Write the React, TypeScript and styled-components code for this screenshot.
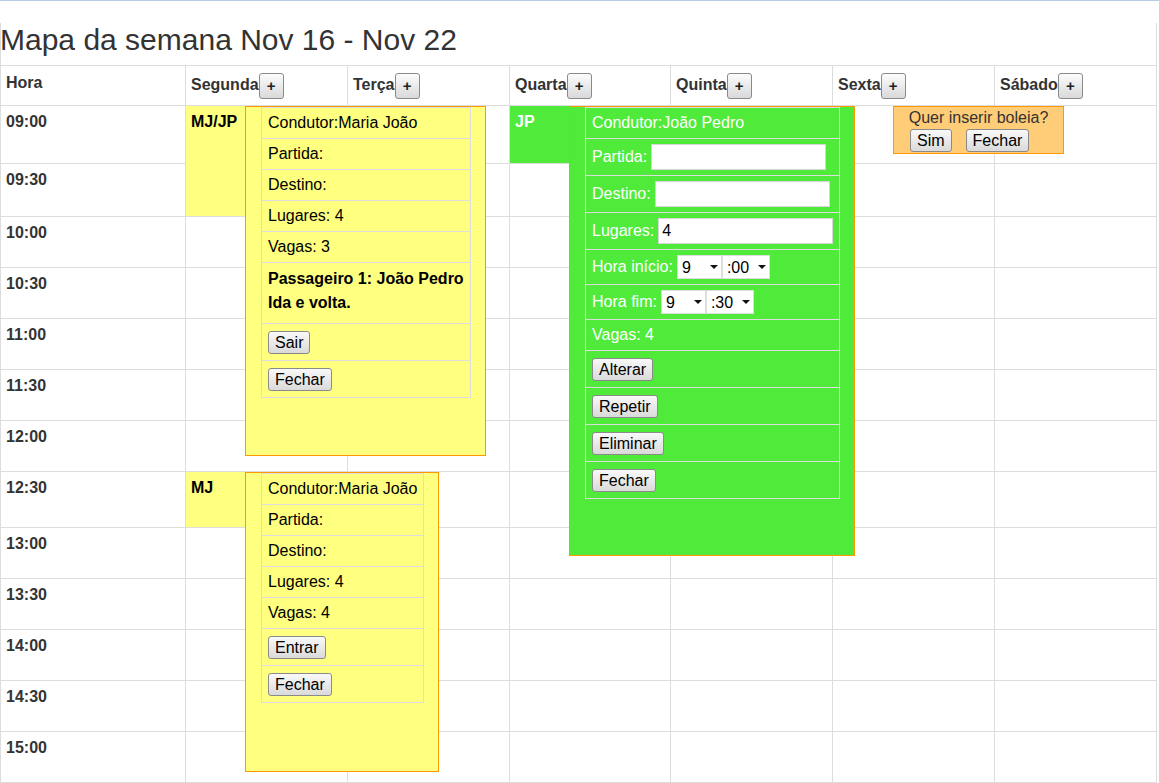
import React from "react";
import styled, { createGlobalStyle } from "styled-components";

const GlobalStyle = createGlobalStyle`
  html, body { margin: 0; padding: 0; background: #fff; overflow: hidden; }
  body {
    font-family: "Liberation Sans", Arial, Helvetica, sans-serif;
    font-size: 14px;
    line-height: 1.42857;
    color: #333;
  }
  * { box-sizing: border-box; }
`;

const Frame = styled.div`
  border-top: 1px solid #b9cbe2;
`;

const Page = styled.div`
  width: 1157px;
  border-left: 1px solid #ddd;
  border-right: 1px solid #ddd;
`;

const Title = styled.h2`
  margin: 22px 0 9px -1px;
  font-size: 30px;
  font-weight: normal;
  line-height: 33px;
  color: #333;
`;

const Schedule = styled.div`
  display: grid;
  grid-template-columns: 184px 161px 161px 160px 161px 161px 161px;
  grid-template-rows: 39px 57px 52px 50px 50px 50px 50px 50px 55px 50px 50px 50px 50px 50px;
  gap: 1px;
  background: #ddd;
  border-top: 1px solid #ddd;
  border-bottom: 1px solid #ddd;
`;

const HeadCell = styled.div<{ $top?: boolean }>`
  background: #fff;
  display: flex;
  align-items: ${(p) => (p.$top ? "flex-start" : "center")};
  padding: ${(p) => (p.$top ? "6px 5px 0" : "0 5px")};
  font-size: 16px;
  font-weight: bold;
  line-height: 22.86px;
  color: #333;
`;

const AddButton = styled.button`
  width: 25px;
  height: 26px;
  margin: 0;
  padding: 0;
  display: flex;
  align-items: center;
  justify-content: center;
  border: 1px solid #8a8a8a;
  border-radius: 3px;
  background: linear-gradient(#fcfcfc, #d9d9d9);
  font: bold 15px "Liberation Sans", Arial, sans-serif;
  color: #222;
`;

const TimeCell = styled.div`
  background: #fff;
  padding: 5px;
  font-size: 16px;
  font-weight: bold;
  line-height: 22.86px;
  color: #333;
`;

const Cell = styled.div<{ $bg?: string; $color?: string; $span?: number }>`
  position: relative;
  background: ${(p) => p.$bg ?? "#fff"};
  color: ${(p) => p.$color ?? "#000"};
  grid-row: ${(p) => (p.$span ? `span ${p.$span}` : "auto")};
  padding: 5px;
  font-size: 16px;
  font-weight: bold;
  line-height: 22.86px;
`;

const Popup = styled.div<{ $bg: string; $color: string; $height: number }>`
  position: absolute;
  top: 0;
  left: 59px;
  z-index: 5;
  width: max-content;
  height: ${(p) => p.$height}px;
  padding: 0 14px 0 15px;
  background: ${(p) => p.$bg};
  color: ${(p) => p.$color};
  border: 1px solid #ff9900;
  font-size: 16px;
  font-weight: normal;
`;

const InfoTable = styled.div`
  display: flex;
  flex-direction: column;
  width: max-content;
  border: 1px solid #ddd;
`;

const InfoRow = styled.div<{ $pad?: string; $lh?: number; $bold?: boolean }>`
  display: flex;
  align-items: center;
  padding: ${(p) => p.$pad ?? "4px 6px"};
  line-height: ${(p) => p.$lh ?? 22}px;
  font-weight: ${(p) => (p.$bold ? "bold" : "normal")};
  white-space: nowrap;
  & + & {
    border-top: 1px solid #ddd;
  }
`;

const PassengerText = styled.div``;

const TextField = styled.input`
  width: 175px;
  height: 26px;
  margin: 0 0 0 4px;
  padding: 1px 3px;
  border: 1px solid #d6d6d6;
  background: #fff;
  font: 16px "Liberation Sans", Arial, sans-serif;
  color: #000;
  outline: none;
`;

const SelectPair = styled.span`
  display: inline-flex;
  margin-left: 4px;
`;

const SelectBox = styled.span`
  position: relative;
  display: inline-flex;
`;

const Select = styled.select<{ $w: number }>`
  appearance: none;
  -webkit-appearance: none;
  width: ${(p) => p.$w}px;
  height: 24px;
  margin: 0;
  padding: 0 0 0 4px;
  border: 1px solid #ddd;
  border-radius: 0;
  background: #fff;
  font: 16px "Liberation Sans", Arial, sans-serif;
  color: #000;
  outline: none;
`;

const Caret = styled.span`
  position: absolute;
  right: 4px;
  top: 10px;
  width: 0;
  height: 0;
  border-left: 4px solid transparent;
  border-right: 4px solid transparent;
  border-top: 4px solid #111;
  pointer-events: none;
`;

const Btn = styled.button`
  height: 23px;
  margin: 0;
  padding: 0 6px;
  border: 1px solid #8a8a8a;
  border-radius: 3px;
  background: linear-gradient(#f9f9f9, #dadada);
  font: 16px "Liberation Sans", Arial, sans-serif;
  line-height: 21px;
  color: #000;
`;

const Prompt = styled.div`
  position: absolute;
  top: 0;
  left: 60px;
  z-index: 5;
  width: 171px;
  height: 48px;
  background: #ffcc77;
  border: 1px solid #ff9900;
  color: #333;
  font-size: 16px;
  font-weight: normal;
`;

const PromptText = styled.div`
  text-align: center;
  line-height: 21px;
`;

const PromptActions = styled.div`
  display: flex;
  gap: 14px;
  margin: 1px 0 0 16px;
`;

const times = [
  "09:00", "09:30", "10:00", "10:30", "11:00", "11:30", "12:00",
  "12:30", "13:00", "13:30", "14:00", "14:30", "15:00",
];
const days = ["Segunda", "Terça", "Quarta", "Quinta", "Sexta", "Sábado"];

const YELLOW = "#ffff80";
const GREEN = "#50eb3a";

const TextRow: React.FC<{ children: React.ReactNode }> = ({ children }) => (
  <InfoRow>{children}</InfoRow>
);

const ButtonRow: React.FC<{ label: string }> = ({ label }) => (
  <InfoRow $pad="7px 6px 6px">
    <Btn>{label}</Btn>
  </InfoRow>
);

const TimeSelect: React.FC<{ w: number; value: string; options: string[] }> = ({ w, value, options }) => (
  <SelectBox>
    <Select $w={w} defaultValue={value}>
      {options.map((o) => (
        <option key={o} value={o}>
          {o}
        </option>
      ))}
    </Select>
    <Caret />
  </SelectBox>
);

const hours = ["8", "9", "10", "11", "12", "13", "14", "15", "16", "17", "18"];
const minutes = [":00", ":30"];

const RideMariaJoao: React.FC = () => (
  <Popup $bg={YELLOW} $color="#000" $height={350}>
    <InfoTable>
      <TextRow>Condutor:Maria João</TextRow>
      <TextRow>Partida:</TextRow>
      <TextRow>Destino:</TextRow>
      <TextRow>Lugares: 4</TextRow>
      <TextRow>Vagas: 3</TextRow>
      <InfoRow $pad="4px 6px 8px" $lh={24} $bold>
        <PassengerText>
          Passageiro 1: João Pedro
          <br />
          Ida e volta.
        </PassengerText>
      </InfoRow>
      <ButtonRow label="Sair" />
      <ButtonRow label="Fechar" />
    </InfoTable>
  </Popup>
);

const RideMariaJoao2: React.FC = () => (
  <Popup $bg={YELLOW} $color="#000" $height={300}>
    <InfoTable>
      <TextRow>Condutor:Maria João</TextRow>
      <TextRow>Partida:</TextRow>
      <TextRow>Destino:</TextRow>
      <TextRow>Lugares: 4</TextRow>
      <TextRow>Vagas: 4</TextRow>
      <ButtonRow label="Entrar" />
      <ButtonRow label="Fechar" />
    </InfoTable>
  </Popup>
);

const RideJoaoPedro: React.FC = () => (
  <Popup $bg={GREEN} $color="#fff" $height={450}>
    <InfoTable>
      <TextRow>Condutor:João Pedro</TextRow>
      <InfoRow $pad="5px 6px">
        Partida:
        <TextField defaultValue="" />
      </InfoRow>
      <InfoRow $pad="5px 6px">
        Destino:
        <TextField defaultValue="" />
      </InfoRow>
      <InfoRow $pad="5px 6px">
        Lugares:
        <TextField defaultValue="4" />
      </InfoRow>
      <InfoRow $pad="5px 6px">
        Hora início:
        <SelectPair>
          <TimeSelect w={45} value="9" options={hours} />
          <TimeSelect w={48} value=":00" options={minutes} />
        </SelectPair>
      </InfoRow>
      <InfoRow $pad="5px 6px">
        Hora fim:
        <SelectPair>
          <TimeSelect w={45} value="9" options={hours} />
          <TimeSelect w={48} value=":30" options={minutes} />
        </SelectPair>
      </InfoRow>
      <TextRow>Vagas: 4</TextRow>
      <ButtonRow label="Alterar" />
      <ButtonRow label="Repetir" />
      <ButtonRow label="Eliminar" />
      <ButtonRow label="Fechar" />
    </InfoTable>
  </Popup>
);

const AskRide: React.FC = () => (
  <Prompt>
    <PromptText>Quer inserir boleia?</PromptText>
    <PromptActions>
      <Btn>Sim</Btn>
      <Btn>Fechar</Btn>
    </PromptActions>
  </Prompt>
);

function renderDayCell(row: number, day: number) {
  const key = `${row}-${day}`;
  if (row === 0 && day === 0) {
    return (
      <Cell key={key} $bg={YELLOW} $span={2}>
        MJ/JP
        <RideMariaJoao />
      </Cell>
    );
  }
  if (row === 1 && day === 0) return null;
  if (row === 0 && day === 2) {
    return (
      <Cell key={key} $bg={GREEN} $color="#fff">
        JP
        <RideJoaoPedro />
      </Cell>
    );
  }
  if (row === 0 && day === 4) {
    return (
      <Cell key={key}>
        <AskRide />
      </Cell>
    );
  }
  if (row === 7 && day === 0) {
    return (
      <Cell key={key} $bg={YELLOW}>
        MJ
        <RideMariaJoao2 />
      </Cell>
    );
  }
  return <Cell key={key} />;
}

export default function App() {
  return (
    <>
      <GlobalStyle />
      <Frame>
        <Page>
          <Title>Mapa da semana Nov 16 - Nov 22</Title>
          <Schedule>
            <HeadCell $top>Hora</HeadCell>
            {days.map((d) => (
              <HeadCell key={d}>
                {d}
                <AddButton>+</AddButton>
              </HeadCell>
            ))}
            {times.map((t, r) => (
              <React.Fragment key={t}>
                <TimeCell>{t}</TimeCell>
                {days.map((_, d) => renderDayCell(r, d))}
              </React.Fragment>
            ))}
          </Schedule>
        </Page>
      </Frame>
    </>
  );
}
